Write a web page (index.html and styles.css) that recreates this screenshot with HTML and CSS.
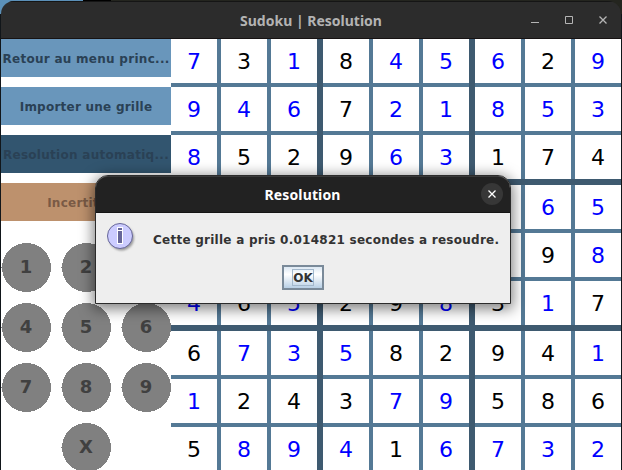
FILE: index.html
```html
<!DOCTYPE html>
<html lang="fr">
<head>
<meta charset="utf-8">
<title>Sudoku | Resolution</title>
<link rel="stylesheet" href="styles.css">
</head>
<body>
<div class="desktop">
<div class="window">
  <header class="titlebar">
    <h1 class="title">Sudoku | Resolution</h1>
    <svg class="controls" width="90" height="20" viewBox="0 0 90 20" fill="none">
      <path d="M6 12.5h8" stroke="#b5b5b5"/>
      <path d="M40.5 6.500h7v7h-7z" stroke="#b5b5b5"/>
      <path d="M74.500 6.500l7 7m0-7l-7 7" stroke="#b5b5b5" stroke-width="1.300"/>
    </svg>
  </header>
  <main class="content">
    <aside class="sidebar">
      <button class="action menu">Retour au menu princ...</button>
      <button class="action import">Importer une grille</button>
      <button class="action auto">Resolution automatiq...</button>
      <button class="action unsure">Incertitude</button>
      <div class="keypad" id="keypad"></div>
    </aside>
    <section class="board" id="board"></section>
  </main>
</div>
<div class="dialog" role="dialog">
  <header class="dialog-bar">
    <h2 class="dialog-title">Resolution</h2>
    <svg class="dialog-close" width="22" height="22" viewBox="0 0 22 22">
      <circle cx="11" cy="11" r="11" fill="#373737"/>
      <path d="M7.500 7.500l7 7m0-7l-7 7" stroke="#fff" stroke-width="1.300"/>
    </svg>
  </header>
  <div class="dialog-body">
    <svg class="info" width="32" height="32" viewBox="0 0 32 32">
      <defs><filter id="soft"><feGaussianBlur stdDeviation="1"/></filter></defs>
      <circle cx="15.500" cy="15" r="12.500" fill="#999" filter="url(#soft)"/>
      <circle cx="14" cy="13" r="12.500" fill="#ccccff" stroke="#666699"/>
      <path d="M11 4h6v4h-6zM11 8h6v13h-6z" fill="#fff"/>
      <path d="M12 5h4v2h-4zM12 8h4v12h-4z" fill="#666699"/>
    </svg>
    <p class="message">Cette grille a pris 0.014821 secondes a resoudre.</p>
    <button class="ok"><span class="ok-label">OK</span></button>
  </div>
</div>
</div>
<script src="board.js"></script>
</body>
</html>
```
FILE: styles.css
```css
* { box-sizing: border-box; }
body { margin: 0; width: 622px; height: 470px; overflow: hidden; background: #11161a; font-family: "DejaVu Sans", sans-serif; }
h1, h2, p { margin: 0; }
button { border: 0; padding: 0; font: inherit; }
.desktop { position: relative; height: 470px; padding: 1px 1px 0; overflow: hidden; background: linear-gradient(90deg, #5b90b8 0 83px, #000 83px 111px, #24251f 111px) 0 0 / 100% 14px no-repeat #11161a; }
.window { overflow: hidden; border-radius: 13px 13px 0 0; }
.titlebar { display: grid; grid-template-columns: 1fr auto; align-items: center; height: 38px; background: #2c2c2c; border-top: 1px solid #151515; border-bottom: 1px solid #171313; }
.title { grid-area: 1 / 1 / 2 / 3; padding-top: 1px; text-align: center; font-family: "Noto Sans", sans-serif; font-size: 14px; line-height: 18px; color: #b3b3b3; }
.controls { grid-area: 1 / 2; margin-right: 6px; }
.content { display: flex; height: 432px; background: #fff; }
.sidebar { display: flex; flex-direction: column; gap: 10px; width: 170px; }
.action { height: 38px; flex: none; padding-top: 3px; white-space: nowrap; font-size: 12px; font-weight: bold; letter-spacing: .24px; line-height: 15px; color: #2a4155; background: #6996bb; }
.auto { color: #2a4155; background: #32556f; }
.auto, .menu { letter-spacing: .28px; }
.unsure { color: #7a5a45; background: #bd916d; }
.keypad { display: grid; grid-template-columns: repeat(3, 50px); gap: 10px; padding-top: 12px; }
.key { display: grid; width: 50px; height: 50px; place-items: center; font-size: 18px; font-weight: bold; line-height: 22px; color: #404040; }
.key > * { grid-area: 1 / 1; }
.key > span { padding-bottom: 3px; }
.key:last-child { grid-column: 2; }
.board { display: grid; grid-template-columns: repeat(3, 146px); grid-template-rows: repeat(3, 140px); gap: 6px; width: 450px; background: #3e5a70; }
.box { display: grid; grid-template-columns: repeat(3, 46px); grid-template-rows: repeat(3, 44px); gap: 4px; background: #547995; }
.cell { display: grid; place-items: center; padding-top: 2px; background: #fff; color: #000; font-size: 22px; line-height: 26px; }
.solved { color: #00f; }
.dialog { position: absolute; left: 95px; top: 175px; width: 416px; height: 129px; border: 1px solid #2b2b2b; border-radius: 13px 13px 0 0; background: #eee; box-shadow: 0 3px 14px 2px rgba(0,0,0,.5); }
.dialog-bar { display: grid; grid-template-columns: 1fr auto; align-items: center; height: 37px; border-radius: 12px 12px 0 0; background: #222; border-top: 1px solid #393939; border-bottom: 1px solid #151515; }
.dialog-title { grid-area: 1 / 1 / 2 / 3; padding-right: 1px; text-align: center; font-family: "Noto Sans", sans-serif; font-size: 14px; letter-spacing: .15px; line-height: 18px; color: #fff; }
.dialog-close { grid-area: 1 / 2; margin-right: 7px; margin-bottom: 2px; }
.dialog-body { display: grid; grid-template-columns: 47px 1fr; grid-template-rows: 42px 26px; padding: 10px 10px 0; }
.message { padding-top: 8px; font-size: 12px; font-weight: bold; letter-spacing: .25px; line-height: 18px; white-space: nowrap; color: #333; }
.ok { grid-column: 1 / 3; justify-self: center; width: 42px; height: 25px; display: grid; place-items: center; border: 2px solid #7a8a99; background: linear-gradient(#dce8f3, #fff 35%, #b8cfe5); }
.ok-label { width: 22px; height: 17px; border: 1px solid #a3b8cc; font-size: 12px; font-weight: bold; line-height: 16px; color: #333; }
```
FILE: board.js
```js
// Digits marked with "b" are the ones the solver filled in; "." is an empty cell.
const rows = [
  "7b 3 1b 8 4b 5b 6b 2 9b",
  "9b 4b 6b 7 2b 1b 8b 5b 3b",
  "8b 5 2 9 6b 3b 1 7 4",
  ". . . . . . . 6b 5b",
  ". . . . . . . 9 8b",
  "4b 6 5b 2 9 8b 3 1b 7",
  "6 7b 3b 5b 8 2 9 4 1b",
  "1b 2 4 3 7b 9b 5 8 6",
  "5 8b 9b 4b 1 6b 7b 3b 2b"
].map(row => row.split(" "));

const board = document.getElementById("board");
for (let b = 0; b < 9; b++) {
  const box = document.createElement("div");
  box.className = "box";
  for (let c = 0; c < 9; c++) {
    const value = rows[Math.floor(b / 3) * 3 + Math.floor(c / 3)][(b % 3) * 3 + c % 3];
    const cell = document.createElement("div");
    cell.className = value.endsWith("b") ? "cell solved" : "cell";
    cell.textContent = value === "." ? "" : value[0];
    box.append(cell);
  }
  board.append(box);
}

document.getElementById("keypad").innerHTML = [..."123456789X"].map(label =>
  `<div class="key"><svg width="50" height="50" shape-rendering="crispEdges" fill="#808080"><circle cx="25.5" cy="24.5" r="24.5"/><path d="M0 24h2v1h-2z"/></svg><span>${label}</span></div>`
).join("");
```
